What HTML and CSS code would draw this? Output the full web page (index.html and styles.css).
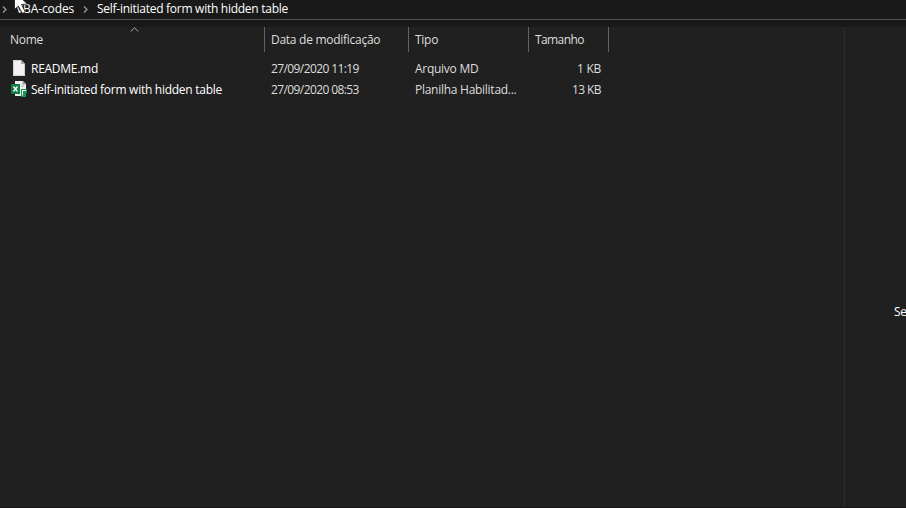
FILE: index.html
```html
<!DOCTYPE html>
<html lang="pt-BR">
<head>
<meta charset="utf-8">
<title>Self-initiated form with hidden table</title>
<link rel="stylesheet" href="styles.css">
</head>
<body>
<div class="window">
  <nav class="address">
    <svg class="chevron" viewBox="0 0 5 7"><path d="M1 .5 4 3.500 1 6.500"/></svg>
    <span class="crumb crumb-parent">VBA-codes</span>
    <svg class="chevron" viewBox="0 0 5 7"><path d="M1 .5 4 3.500 1 6.500"/></svg>
    <span class="crumb crumb-current">Self-initiated form with hidden table</span>
  </nav>
  <main class="content">
    <section class="files">
      <div class="row head">
        <div class="cell"><span>Nome</span>
          <svg class="sort" viewBox="0 0 9 5"><path d="M.7 4.500 4.500 .8 8.300 4.500"/></svg>
        </div>
        <div class="cell"><span>Data de modificação</span></div>
        <div class="cell"><span>Tipo</span></div>
        <div class="cell"><span class="narrow">Tamanho</span></div>
      </div>
      <div class="row file">
        <div class="cell name">
          <svg class="icon" viewBox="0 0 16 16"><path d="M2 0h8l4 4v12H2z" fill="#f1f1f1"/><path d="M2.500.5h7.300l3.700 3.700v11.300h-11z" fill="none" stroke="#d2d2d2"/><path d="M10 0v4h4z" fill="#a9a9a9"/></svg>
          <span>README.md</span>
        </div>
        <div class="cell"><span class="narrow">27/09/2020 11:19</span></div>
        <div class="cell"><span>Arquivo MD</span></div>
        <div class="cell size"><span>1 KB</span></div>
      </div>
      <div class="row file">
        <div class="cell name">
          <svg class="icon" viewBox="0 0 16 16"><path d="M4 0h8l3 3v12H4z" fill="#eee"/><path d="M11.500 0v3.500H15z" fill="#999"/><path d="M10 5h3" stroke="#b5b5b5"/><path d="M10 8h6v4h-1v4h-5z" fill="#159455"/><path d="M11 9.500h4M11.500 10v4.500" stroke="#e8fff2"/><path d="M0 3h9v10H0z" fill="#107c41"/><path d="m2.500 5.500 4 5m0-5-4 5" stroke="#fff" stroke-width="1.400"/></svg>
          <span>Self-initiated form with hidden table</span>
        </div>
        <div class="cell"><span class="narrow">27/09/2020 08:53</span></div>
        <div class="cell"><span>Planilha Habilitad...</span></div>
        <div class="cell size"><span class="narrow">13 KB</span></div>
      </div>
    </section>
    <aside class="preview"><span>Se</span></aside>
  </main>
  <svg class="cursor" viewBox="0 0 20 14"><path d="M1.500-2V9.500L5.300 6 9.500 13.500l2.800-1.500L8.500 4.500l6-.5L8-2z" fill="#fff" stroke="#111" stroke-width=".8"/></svg>
</div>
</body>
</html>
```
FILE: styles.css
```css
* { box-sizing: border-box; }
body { margin: 0; background: #191919; font: 12px/20px "Open Sans", "Noto Sans", sans-serif; letter-spacing: -.27px; color: #fff; }
.window { position: relative; height: 508px; overflow: hidden; display: flex; flex-direction: column; border-bottom: 1px solid #1c1519; }
.address { height: 20px; flex: none; display: flex; align-items: center; border-bottom: 1px solid #535353; padding: 0 0 2px 2px; white-space: nowrap; line-height: 17px; }
.chevron { width: 5px; height: 7px; margin-top: 1px; flex: none; fill: none; stroke: #999; stroke-width: 1.3; }
.crumb-parent { width: 67px; margin-left: 9px; letter-spacing: -.1px; }
.crumb-current { margin-left: 9px; }
.content { flex: 1; margin-top: 7px; display: flex; background: #202020; min-height: 0; }
.files { width: 845px; border-right: 1px solid #2b2b2b; }
.row { display: grid; grid-template-columns: 265px 144px 120px 80px; }
.cell { padding-left: 6px; white-space: nowrap; overflow: hidden; }
.head { height: 25px; margin-bottom: 7px; color: #dedede; line-height: 25px; }
.head .cell { border-right: 1px solid #636363; position: relative; }
.head .cell:first-child { padding-left: 10px; }
.sort { position: absolute; left: 130px; top: 0; width: 9px; height: 5px; fill: none; stroke: #aaa; }
.file { height: 21px; color: #dedede; }
.name { display: flex; padding-left: 11px; color: #fff; }
.icon { width: 16px; height: 16px; margin: 1px 4px 0 0; flex: none; }
.narrow { letter-spacing: -.6px; }
.size { text-align: right; padding-right: 8px; }
.preview { flex: 1; overflow: hidden; padding: 275px 0 0 49px; white-space: nowrap; }
.cursor { position: absolute; left: 13px; top: 0; width: 20px; height: 14px; }
```
